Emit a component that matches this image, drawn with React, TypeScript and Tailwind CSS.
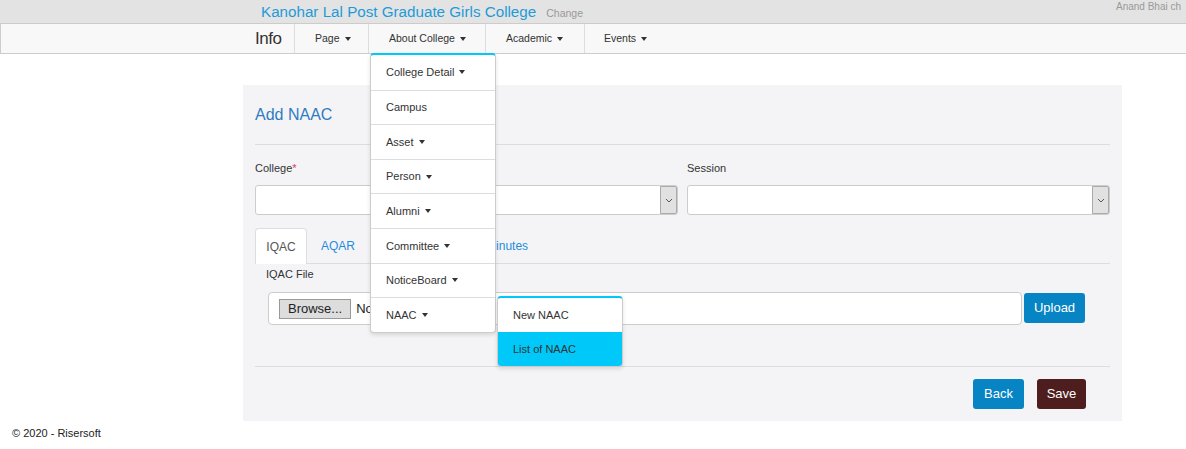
function Caret() {
  return (
    <span className="ml-[5px] inline-block h-0 w-0 border-x-[3.5px] border-t-[4px] border-x-transparent border-t-[#333] align-middle" />
  );
}

function Select({ width }: { width: string }) {
  return (
    <div className={`${width} flex h-[30px] rounded-[3px] border border-[#ccc] bg-white`}>
      <div className="flex-1" />
      <div className="flex w-[17px] items-center justify-center rounded-r-[2px] border border-[#aaa] bg-[#e1e1e1]">
        <svg width="8" height="5" viewBox="0 0 8 5">
          <path d="M1 1 L4 4 L7 1" fill="none" stroke="#555" strokeWidth="1" />
        </svg>
      </div>
    </div>
  );
}

const menuItems = [
  { label: "College Detail", caret: true },
  { label: "Campus", caret: false },
  { label: "Asset", caret: true },
  { label: "Person", caret: true },
  { label: "Alumni", caret: true },
  { label: "Committee", caret: true },
  { label: "NoticeBoard", caret: true },
  { label: "NAAC", caret: true },
];

export default function App() {
  return (
    <div className="relative min-h-[449px] bg-white font-['Liberation_Sans',Arial,sans-serif] text-[#333]">
      {/* top bar */}
      <div className="flex h-[23px] overflow-hidden bg-[#e3e3e3]">
        <div className="flex w-[1116px] shrink-0 items-baseline gap-[10px] pl-[261px] pt-[3px]">
          <span className="text-[15.2px] leading-[18px] text-[#1e9bd7]">
            Kanohar Lal Post Graduate Girls College
          </span>
          <span className="text-[10.5px] text-[#999]">Change</span>
        </div>
        <div className="whitespace-nowrap pt-[1px] text-[10px] leading-[12px] text-[#999]">Anand Bhai ch</div>
      </div>

      {/* nav */}
      <div className="flex h-[31px] border-y border-l border-[#ccc] bg-[#f8f8f8] pl-[254px] text-[10.5px]">
        <div className="flex w-[39px] items-center text-[17px] leading-none tracking-[-0.5px] text-[#333]">Info</div>
        <div className="flex w-[74px] items-center border-l border-[#ddd] pl-[20px]">
          Page
          <Caret />
        </div>
        <div className="flex w-[117px] items-center border-l border-[#ddd] pl-[20px]">
          About College
          <Caret />
        </div>
        <div className="flex w-[99px] items-center border-l border-[#ddd] pl-[20px]">
          Academic
          <Caret />
        </div>
        <div className="flex items-center border-l border-[#ddd] pl-[19px] pr-[20px]">
          Events
          <Caret />
        </div>
      </div>

      {/* panel */}
      <div className="ml-[243px] mt-[31px] w-[879px] bg-[#f4f4f6] px-[12px] pb-[12px] pt-[20px]">
        <h1 className="text-[16px] leading-[20px] text-[#2f7bbf]">Add NAAC</h1>
        <div className="mt-[19px] border-t border-[#ddd]" />

        <div className="mt-[16px] flex gap-[9px]">
          <div className="w-[423px]">
            <div className="text-[11px] leading-[14px]">
              College<span className="text-[#e0345b]">*</span>
            </div>
            <div className="mt-[10px]">
              <Select width="w-[423px]" />
            </div>
          </div>
          <div className="w-[423px]">
            <div className="text-[11px] leading-[14px]">Session</div>
            <div className="mt-[10px]">
              <Select width="w-[423px]" />
            </div>
          </div>
        </div>

        {/* tabs */}
        <div className="mt-[13px] flex border-b border-[#ddd] text-[12px]">
          <div className="-mb-px flex h-[36px] w-[52px] items-center justify-center rounded-t-[4px] border border-b-0 border-[#ddd] bg-white text-[#555]">
            IQAC
          </div>
          <div className="flex h-[35px] items-center px-[14px] text-[#1f8ce0]">AQAR</div>
          <div className="flex h-[35px] w-[57px] items-center px-[14px] text-[#1f8ce0]">SSR</div>
          <div className="flex h-[35px] items-center px-[14px] text-[#1f8ce0]">Meeting Minutes</div>
        </div>

        <div className="mt-[3px] pl-[11px] text-[11px] leading-[14px]">IQAC File</div>
        <div className="mt-[11px] flex items-start gap-[2px] pl-[13px]">
          <div className="flex h-[33px] w-[754px] items-center gap-[5px] rounded-[4px] border border-[#ccc] bg-white pl-[10px] text-[13px]">
            <div className="flex h-[20px] items-center border border-[#999] bg-[#ddd] px-[8px] text-[#222]">
              Browse...
            </div>
            <span className="text-[#222]">No file selected.</span>
          </div>
          <button className="mt-[1px] h-[30px] w-[61px] rounded-[3px] bg-[#0784c3] text-[13px] text-white">
            Upload
          </button>
        </div>

        <div className="mt-[41px] border-t border-[#ddd]" />
        <div className="mt-[12px] flex justify-end gap-[13px] pr-[24px]">
          <button className="h-[30px] w-[51px] rounded-[3px] bg-[#0784c3] text-[13px] text-white">Back</button>
          <button className="h-[30px] w-[49px] rounded-[3px] bg-[#4e1e1e] text-[13px] text-white">Save</button>
        </div>
      </div>

      <div className="mt-[5px] pl-[12px] text-[11px] leading-[14px] text-[#222]">© 2020 - Risersoft</div>

      {/* dropdown menu */}
      <div className="absolute left-[370px] top-[53px] w-[126px] overflow-hidden rounded-[4px] border border-t-2 border-[#ccc] border-t-[#00c8f8] bg-white text-[11px] shadow-[0_2px_4px_rgba(0,0,0,0.12)]">
        {menuItems.map((item, i) => (
          <div
            key={item.label}
            className={`flex h-[34.6px] items-center pl-[15px] text-[#333] ${i > 0 ? "border-t border-[#ddd]" : ""}`}
          >
            {item.label}
            {item.caret && <Caret />}
          </div>
        ))}
      </div>

      {/* submenu */}
      <div className="absolute left-[497px] top-[296px] w-[126px] overflow-hidden rounded-[4px] border border-t-2 border-[#ccc] border-t-[#00c8f8] bg-white text-[11px] shadow-[0_2px_4px_rgba(0,0,0,0.12)]">
        <div className="flex h-[34px] items-center pl-[15px]">New NAAC</div>
        <div className="flex h-[34px] items-center bg-[#00c8f8] pl-[15px]">List of NAAC</div>
      </div>
    </div>
  );
}
